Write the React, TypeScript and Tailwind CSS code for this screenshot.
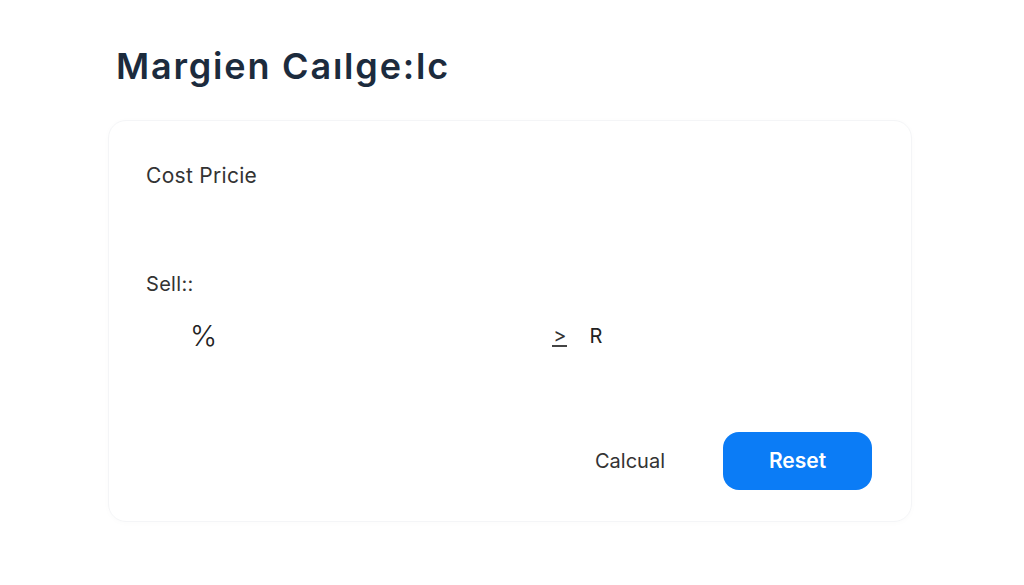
const App = () => {
  return (
    <div
      className="w-full h-[585px] bg-white overflow-hidden"
      style={{ fontFamily: "Inter, 'Liberation Sans', sans-serif" }}
    >
      <div className="pt-[42px] pl-[116px]">
        <h1 className="text-[36px] leading-[48px] font-semibold text-[#1c2b3d] tracking-[1.8px]">
          Margien Caılge:lc
        </h1>
      </div>

      <div className="ml-[108px] mt-[30px] w-[804px] h-[402px] rounded-[18px] border border-[#f4f5f7] shadow-[0_1px_6px_rgba(0,0,0,0.02)] flex flex-col pl-[37px]">
        <div className="mt-[43px] text-[21px] leading-[24px] text-[#333] tracking-[0.3px]">Cost Pricie</div>

        <div className="mt-[84px] text-[20px] leading-[24px] text-[#333] tracking-[0.3px]">Sell::</div>

        <div className="mt-[20px] flex items-center h-[40px]">
          <span className="ml-[44px] text-[29px] font-light text-[#222]">%</span>
          <span className="ml-[335px] text-[20px] text-[#333] border-b-2 border-[#444] leading-[20px] px-[1px]">
            &gt;
          </span>
          <span className="ml-[22px] text-[20px] text-[#222]">R</span>
        </div>

        <div className="mt-[76px] flex items-center">
          <span className="ml-[449px] text-[20px] text-[#333]">Calcual</span>
          <button className="ml-[58px] w-[149px] h-[58px] rounded-[16px] bg-[#0b7cf6] text-white text-[21px] font-semibold">
            Reset
          </button>
        </div>
      </div>
    </div>
  );
};

export default App;
